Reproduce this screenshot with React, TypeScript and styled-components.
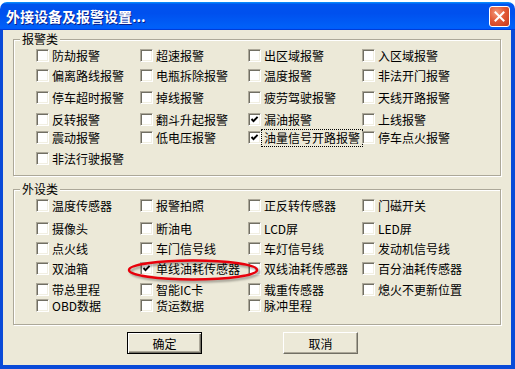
import React from "react";
import styled, { createGlobalStyle } from "styled-components";

const Global = createGlobalStyle`
  html, body { margin: 0; padding: 0; background: #fff; }
  body { font-family: "Noto Sans CJK SC", "Noto Sans", sans-serif; }
`;

const Window = styled.div`
  position: relative;
  width: 515px;
  height: 367px;
  margin-top: 2px;
  display: flex;
  flex-direction: column;
  border-radius: 7px 7px 0 0;
  overflow: hidden;
`;

const TitleBar = styled.div`
  height: 28px;
  flex: none;
  display: flex;
  align-items: center;
  justify-content: space-between;
  padding: 0 5px 0 6px;
  background: linear-gradient(
    180deg,
    #0997ff,
    #0053ee 8%,
    #0050ee 40%,
    #0060f8 88%,
    #0060f8 93%,
    #005bff 95%,
    #003dd7 96%,
    #003dd7
  );
`;

const Title = styled.div`
  color: #fff;
  font-size: 14px;
  font-weight: bold;
  line-height: 16px;
  text-shadow: 1px 1px 0 #0a1e8a;
  white-space: nowrap;
`;

const CloseButton = styled.div`
  width: 21px;
  height: 21px;
  box-sizing: border-box;
  border: 1px solid #fff;
  border-radius: 3px;
  background: radial-gradient(circle at 35% 30%, #f39a7c 0%, #e25a37 45%, #c7381a 100%);
  display: flex;
  align-items: center;
  justify-content: center;
`;

const Frame = styled.div`
  flex: 1;
  display: flex;
  flex-direction: column;
  border-style: solid;
  border-width: 0 4px 4px 3px;
  border-color: #0a4ad8;
  background: #ece9d8;
  padding: 2px 10px 0 10px;
`;

const Group = styled.fieldset<{ $gap: number }>`
  margin: ${(p) => p.$gap}px 0 0 0;
  padding: 0;
  min-width: 0;
  width: 488px;
  box-sizing: border-box;
  border: 1px solid #aca899;
  box-shadow: inset 1px 1px 0 #fff, 1px 1px 0 #fff;
`;

const Legend = styled.legend`
  margin-left: 6px;
  padding: 0 2px;
  font-size: 12px;
  line-height: 14px;
  color: #000;
  background: #ece9d8;
`;

const Grid = styled.div<{ $rows: string; $bottom: number }>`
  display: grid;
  grid-template-columns: 104px 108px 114px 1fr;
  grid-template-rows: ${(p) => p.$rows};
  align-items: start;
  padding: 0 0 ${(p) => p.$bottom}px 22px;
`;

const Item = styled.div`
  display: flex;
  align-items: center;
  gap: 3px;
  height: 19px;
  white-space: nowrap;
`;

const Box = styled.span`
  width: 13px;
  height: 13px;
  flex: none;
  box-sizing: border-box;
  background: #fff;
  border-style: solid;
  border-width: 1px;
  border-color: #aca899 #fff #fff #aca899;
  box-shadow: inset 1px 1px 0 #716f64, inset -1px -1px 0 #f1efe2;
  display: flex;
  align-items: center;
  justify-content: center;
`;

const Text = styled.span<{ $focused?: boolean }>`
  font-size: 12px;
  line-height: 14px;
  color: #000;
  ${(p) =>
    p.$focused
      ? `outline: 1px dotted #000; padding: 1px 2px; margin: -1px -2px;`
      : ""}
`;

const ButtonRow = styled.div`
  display: flex;
  gap: 81px;
  padding-left: 114px;
  margin-top: 7px;
`;

const Button = styled.div<{ $default?: boolean }>`
  width: 75px;
  height: 22px;
  box-sizing: border-box;
  display: flex;
  align-items: center;
  justify-content: center;
  font-size: 12px;
  color: #000;
  background: #ece9d8;
  border: 1px solid ${(p) => (p.$default ? "#000" : "#ece9d8")};
  box-shadow: ${(p) =>
    p.$default
      ? "inset 1px 1px 0 #fff, inset -1px -1px 0 #716f64, inset -2px -2px 0 #aca899"
      : "-1px -1px 0 0 #fff inset, 1px 1px 0 #716f64, inset -1px -1px 0 #aca899"};
  ${(p) => (p.$default ? "" : "border-color: #fff #716f64 #716f64 #fff; box-shadow: inset -1px -1px 0 #aca899;")}
`;

const Annotation = styled.svg`
  position: absolute;
  left: 126px;
  top: 254px;
  overflow: visible;
  pointer-events: none;
`;

type Cell = { t: string; c?: boolean; f?: boolean };

const alarms: Cell[] = [
  { t: "防劫报警" }, { t: "超速报警" }, { t: "出区域报警" }, { t: "入区域报警" },
  { t: "偏离路线报警" }, { t: "电瓶拆除报警" }, { t: "温度报警" }, { t: "非法开门报警" },
  { t: "停车超时报警" }, { t: "掉线报警" }, { t: "疲劳驾驶报警" }, { t: "天线开路报警" },
  { t: "反转报警" }, { t: "翻斗升起报警" }, { t: "漏油报警", c: true }, { t: "上线报警" },
  { t: "震动报警" }, { t: "低电压报警" }, { t: "油量信号开路报警", c: true, f: true }, { t: "停车点火报警" },
  { t: "非法行驶报警" },
];

const devices: Cell[] = [
  { t: "温度传感器" }, { t: "报警拍照" }, { t: "正反转传感器" }, { t: "门磁开关" },
  { t: "摄像头" }, { t: "断油电" }, { t: "LCD屏" }, { t: "LED屏" },
  { t: "点火线" }, { t: "车门信号线" }, { t: "车灯信号线" }, { t: "发动机信号线" },
  { t: "双油箱" }, { t: "单线油耗传感器", c: true }, { t: "双线油耗传感器" }, { t: "百分油耗传感器" },
  { t: "带总里程" }, { t: "智能IC卡" }, { t: "载重传感器" }, { t: "熄火不更新位置" },
  { t: "OBD数据" }, { t: "货运数据" }, { t: "脉冲里程" },
];

const Check = () => (
  <svg width="9" height="9" viewBox="0 0 9 9">
    <path d="M1.5 4 L3.5 6.2 L7.6 1.8" fill="none" stroke="#000" strokeWidth="1.9" />
  </svg>
);

const CheckItem = ({ cell }: { cell: Cell }) => (
  <Item>
    <Box>{cell.c ? <Check /> : null}</Box>
    <Text $focused={cell.f}>{cell.t}</Text>
  </Item>
);

export default function App() {
  return (
    <>
      <Global />
      <Window>
        <TitleBar>
          <Title>外接设备及报警设置...</Title>
          <CloseButton>
            <svg width="11" height="11" viewBox="0 0 11 11">
              <path d="M1.5 1.5 L9.5 9.5 M9.5 1.5 L1.5 9.5" stroke="#fff" strokeWidth="2" strokeLinecap="square" />
            </svg>
          </CloseButton>
        </TitleBar>
        <Frame>
          <Group $gap={0}>
            <Legend>报警类</Legend>
            <Grid $rows="20px 22px 22px 18px 21px 20px" $bottom={6}>
              {alarms.map((c, i) => (
                <CheckItem key={i} cell={c} />
              ))}
            </Grid>
          </Group>
          <Group $gap={6}>
            <Legend>外设类</Legend>
            <Grid $rows="23px 20px 20px 21px 16px 20px" $bottom={8}>
              {devices.map((c, i) => (
                <CheckItem key={i} cell={c} />
              ))}
            </Grid>
          </Group>
          <ButtonRow>
            <Button $default>确定</Button>
            <Button>取消</Button>
          </ButtonRow>
        </Frame>
        <Annotation width="136" height="28" viewBox="0 0 136 28">
          <defs>
            <filter id="blur" x="-10%" y="-50%" width="120%" height="200%">
              <feGaussianBlur stdDeviation="1" />
            </filter>
          </defs>
          <ellipse cx="69" cy="16" rx="64" ry="9.5" fill="none" stroke="rgba(0,0,0,0.35)" strokeWidth="2.5" filter="url(#blur)" />
          <ellipse cx="67" cy="14" rx="64" ry="9.5" fill="none" stroke="#e8000b" strokeWidth="2.5" />
        </Annotation>
      </Window>
    </>
  );
}
